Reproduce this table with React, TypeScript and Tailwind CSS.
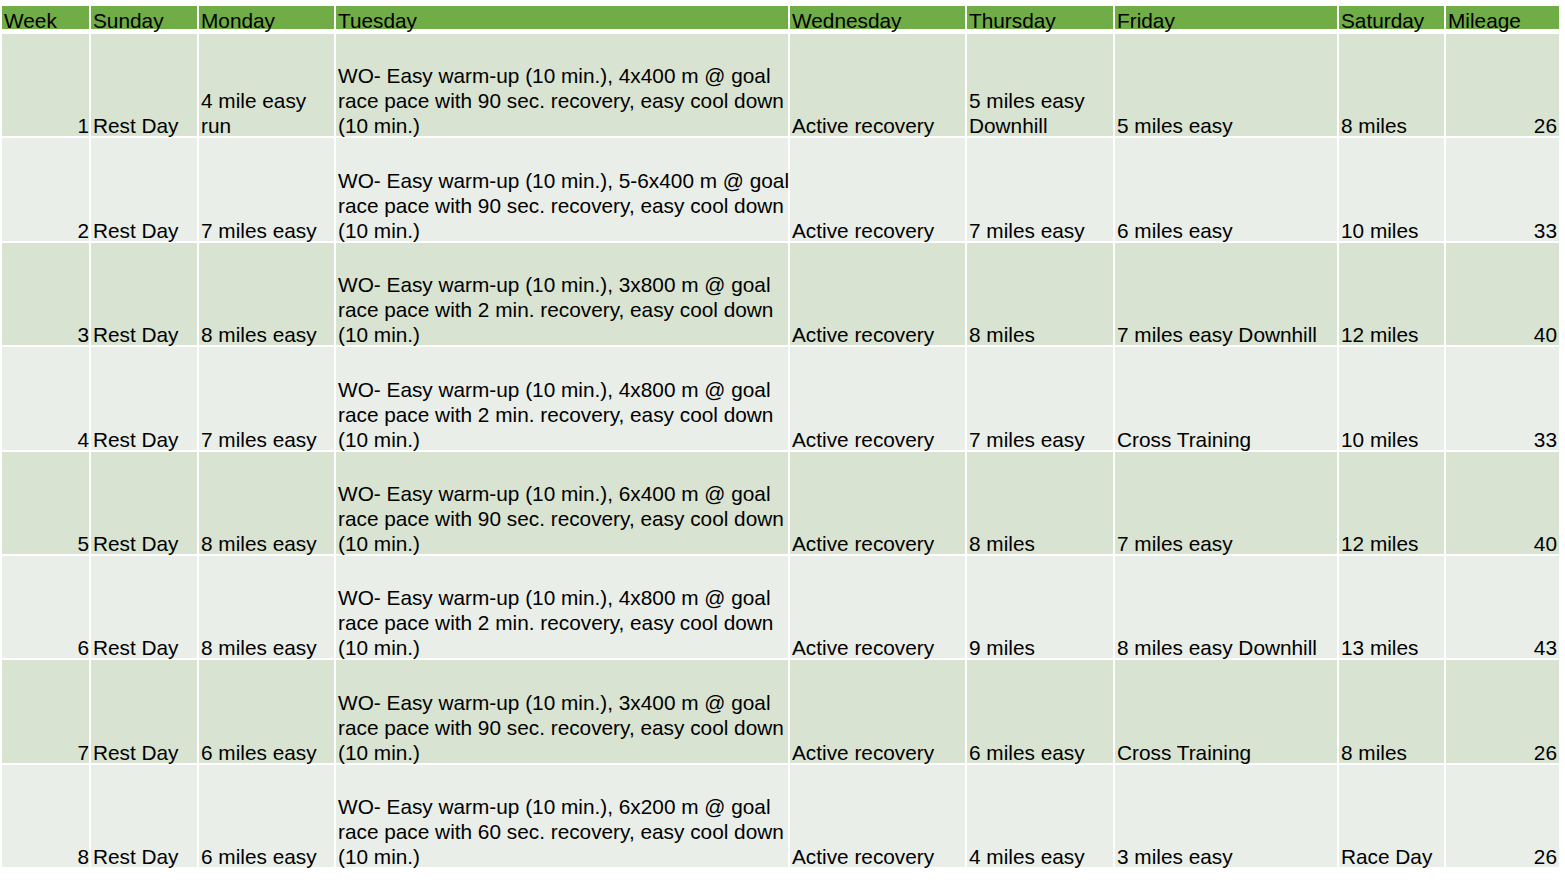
const cols = "grid grid-cols-[87px_106px_135px_452px_175px_146px_222px_105px_113px] gap-x-[2px]";

const headers = ["Week", "Sunday", "Monday", "Tuesday", "Wednesday", "Thursday", "Friday", "Saturday", "Mileage"];

type Row = {
  week: number;
  monday: string[];
  tuesday: string[];
  thursday: string[];
  friday: string;
  saturday: string;
  mileage: number;
};

const wo = (reps: string, rec: string) => [
  `WO- Easy warm-up (10 min.), ${reps} @ goal`,
  `race pace with ${rec} recovery, easy cool down`,
  "(10 min.)",
];

const rows: Row[] = [
  { week: 1, monday: ["4 mile easy", "run"], tuesday: wo("4x400 m", "90 sec."), thursday: ["5 miles easy", "Downhill"], friday: "5 miles easy", saturday: "8 miles", mileage: 26 },
  { week: 2, monday: ["7 miles easy"], tuesday: wo("5-6x400 m", "90 sec."), thursday: ["7 miles easy"], friday: "6 miles easy", saturday: "10 miles", mileage: 33 },
  { week: 3, monday: ["8 miles easy"], tuesday: wo("3x800 m", "2 min."), thursday: ["8 miles"], friday: "7 miles easy Downhill", saturday: "12 miles", mileage: 40 },
  { week: 4, monday: ["7 miles easy"], tuesday: wo("4x800 m", "2 min."), thursday: ["7 miles easy"], friday: "Cross Training", saturday: "10 miles", mileage: 33 },
  { week: 5, monday: ["8 miles easy"], tuesday: wo("6x400 m", "90 sec."), thursday: ["8 miles"], friday: "7 miles easy", saturday: "12 miles", mileage: 40 },
  { week: 6, monday: ["8 miles easy"], tuesday: wo("4x800 m", "2 min."), thursday: ["9 miles"], friday: "8 miles easy Downhill", saturday: "13 miles", mileage: 43 },
  { week: 7, monday: ["6 miles easy"], tuesday: wo("3x400 m", "90 sec."), thursday: ["6 miles easy"], friday: "Cross Training", saturday: "8 miles", mileage: 26 },
  { week: 8, monday: ["6 miles easy"], tuesday: wo("6x200 m", "60 sec."), thursday: ["4 miles easy"], friday: "3 miles easy", saturday: "Race Day", mileage: 26 },
];

const Cell = ({ lines, right, bg, pad = "px-[2px]" }: { lines: string[]; right?: boolean; bg: string; pad?: string }) => (
  <div className={`${bg} ${pad} flex flex-col justify-end`}>
    <div className={`mb-[-2px] whitespace-nowrap leading-[25px] ${right ? "text-right" : ""}`}>
      {lines.map((l, i) => (
        <div key={i}>{l}</div>
      ))}
    </div>
  </div>
);

const App = () => {
  return (
    <div className="w-[1565px] h-[882px] bg-white overflow-hidden pt-[6px] pl-[2px] text-[20.8px] text-black" style={{ fontFamily: '"Liberation Sans", Arial, sans-serif' }}>
      <div className={`${cols} h-[23px]`}>
        {headers.map((h) => (
          <div key={h} className="bg-[#70AD47] flex items-end px-[2px]">
            <div className="mb-[-4px] leading-[25px] whitespace-nowrap">{h}</div>
          </div>
        ))}
      </div>
      <div className={`${cols} mt-[5px] h-[833px] grid-rows-[repeat(8,1fr)] gap-y-[2px]`}>
        {rows.map((r) => {
          const bg = r.week % 2 === 1 ? "bg-[#D8E3D1]" : "bg-[#E9EEE8]";
          return [
            <Cell key={`w${r.week}`} bg={bg} right pad="pl-[2px] pr-0" lines={[String(r.week)]} />,
            <Cell key={`su${r.week}`} bg={bg} lines={["Rest Day"]} />,
            <Cell key={`mo${r.week}`} bg={bg} lines={r.monday} />,
            <Cell key={`tu${r.week}`} bg={bg} lines={r.tuesday} />,
            <Cell key={`we${r.week}`} bg={bg} lines={["Active recovery"]} />,
            <Cell key={`th${r.week}`} bg={bg} lines={r.thursday} />,
            <Cell key={`fr${r.week}`} bg={bg} lines={[r.friday]} />,
            <Cell key={`sa${r.week}`} bg={bg} lines={[r.saturday]} />,
            <Cell key={`mi${r.week}`} bg={bg} right lines={[String(r.mileage)]} />,
          ];
        })}
      </div>
    </div>
  );
};

export default App;
